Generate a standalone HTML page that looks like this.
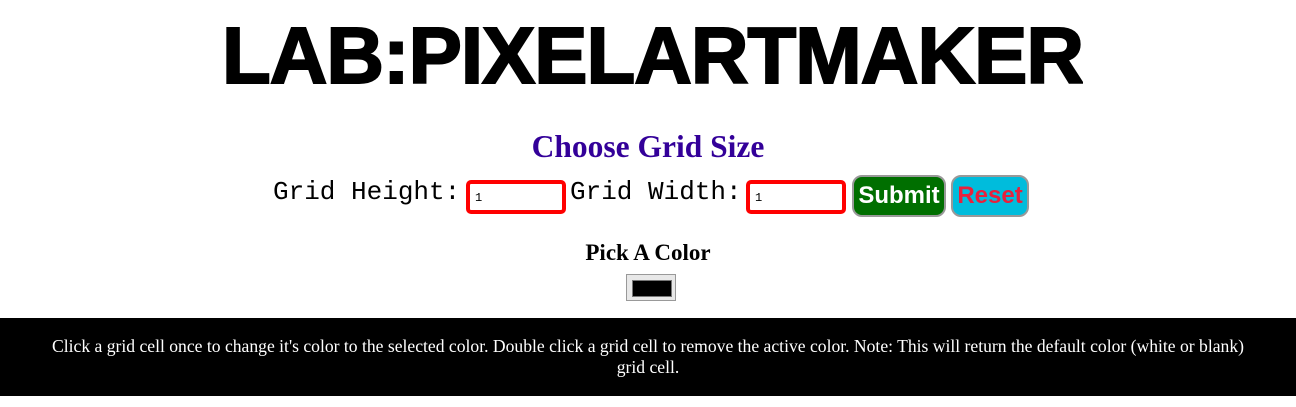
<!DOCTYPE html>
<html><head><style>
body{margin:0;width:1296px;height:407px;background:#fff;position:relative;overflow:hidden;font-family:"Liberation Serif",serif}
.title{position:absolute;left:222px;top:16px;width:861px;height:80px;overflow:hidden}
.title span{display:inline-block;font-family:"Liberation Sans",sans-serif;font-weight:900;font-size:80px;line-height:80px;letter-spacing:-1px;transform-origin:0 0;white-space:nowrap;color:#000;-webkit-text-stroke:2px #000}
h2{position:absolute;top:129px;left:0;width:1296px;margin:0;text-align:center;color:#330099;font-size:31.5px;font-weight:bold}
.row{position:absolute;top:175px;left:0;width:1296px;height:42px}
.lbl{position:absolute;top:2px;font-family:"Liberation Mono",monospace;font-size:26px}
.inp{position:absolute;top:5px;width:87px;height:26px;border:4px solid red;border-radius:5px;font-family:"Liberation Mono",monospace;font-size:12px;line-height:28px;padding-left:5px;box-sizing:content-box}
.btn{position:absolute;top:0;border:2px solid #999;border-radius:10px;font-family:"Liberation Sans",sans-serif;font-weight:bold;font-size:24px;line-height:38px;text-align:center;box-sizing:border-box;height:42px}
h3{position:absolute;top:240px;left:0;width:1296px;margin:0;text-align:center;font-size:23px;font-weight:bold}
.cp{position:absolute;left:626px;top:274px;width:50px;height:27px;background:#e8e8e8;border:1px solid #999;box-sizing:border-box}
.cp div{position:absolute;left:5px;top:5px;width:38px;height:15px;background:#000;border:1px solid #777}
footer{position:absolute;top:318px;left:0;width:1296px;height:78px;background:#000;color:#fff;font-size:17.6px;text-align:center;line-height:21px;box-sizing:border-box;padding:18px 0 0;white-space:nowrap}
</style></head><body>
<div class="title"><span id="t" style="transform:scale(0.93,1)">LAB:PIXELARTMAKER</span></div>
<h2>Choose Grid Size</h2>
<div class="row">
<div class="lbl" style="left:273px">Grid Height:</div>
<div class="inp" style="left:466px">1</div>
<div class="lbl" style="left:570px">Grid Width:</div>
<div class="inp" style="left:746px">1</div>
<div class="btn" style="left:852px;width:94px;background:#006f00;color:#fff">Submit</div>
<div class="btn" style="left:951px;width:78px;background:#00bcdc;color:#e8203c">Reset</div>
</div>
<h3>Pick A Color</h3>
<div class="cp"><div></div></div>
<footer>Click a grid cell once to change it's color to the selected color. Double click a grid cell to remove the active color. Note: This will return the default color (white or blank)<br>grid cell.</footer>
<script>
var t=document.getElementById('t');var w=t.offsetWidth;t.style.transform='scale('+(861/w)+',1)';
</script>
</body></html>
